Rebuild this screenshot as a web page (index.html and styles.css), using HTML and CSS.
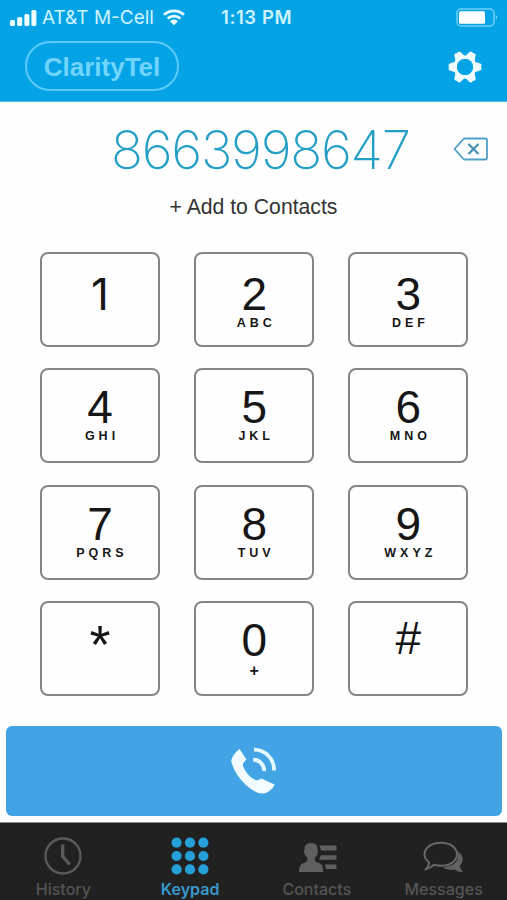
FILE: index.html
```html
<!DOCTYPE html>
<html lang="en">
<head>
  <meta charset="utf-8">
  <title>ClarityTel - Keypad</title>
  <link rel="stylesheet" href="styles.css">
</head>
<body>
  <div class="phone">
    <header class="header">
      <div class="status-bar">
        <svg class="signal" width="27" height="17" viewBox="0 0 27 17">
          <rect x="0" y="11" width="5" height="6" rx="1.5"/>
          <rect x="7.2" y="8" width="5" height="9" rx="1.5"/>
          <rect x="14.4" y="5" width="5" height="12" rx="1.5"/>
          <rect x="21.4" y="1" width="5" height="16" rx="1.5"/>
        </svg>
        <span class="carrier">AT&amp;T M-Cell</span>
        <svg class="wifi" width="24" height="18" viewBox="0 0 24 18">
          <path d="M2 6.8a14.5 14.5 0 0 1 20 0M5.7 10.6a9.2 9.2 0 0 1 12.6 0" fill="none" stroke="#e8fbff" stroke-width="2.8"/>
          <path d="M12 17.2l-3.9-4a5.6 5.6 0 0 1 7.8 0z" fill="#e8fbff"/>
        </svg>
        <span class="time">1:13 PM</span>
        <svg class="battery" width="43" height="19" viewBox="0 0 43 19">
          <rect x="1" y="1" width="37" height="17" rx="4" fill="none" stroke="#70d0f8" stroke-width="1.5"/>
          <rect x="3" y="3.2" width="26" height="12.6" rx="1.5" fill="#fff"/>
          <path d="M39.8 6.8q2.8 2.7 0 5.4z" fill="#70d0f8"/>
        </svg>
      </div>
      <div class="title-bar">
        <div class="brand">ClarityTel</div>
        <svg class="gear" width="34" height="32" viewBox="-17 -16 34 32">
          <g fill="#effcff">
            <g id="teeth">
              <path id="tooth" d="M-5.5 -9L-3.5 -15.2Q-3 -16.8 -1.5 -16.4Q0 -15.8 1.5 -16.4Q3 -16.8 3.5 -15.2L5.5 -9z" transform="rotate(90)"/>
              <use href="#tooth" transform="rotate(60)"/>
              <use href="#tooth" transform="rotate(120)"/>
            </g>
            <use href="#teeth" transform="rotate(180)"/>
          </g>
          <circle r="9.8" fill="none" stroke="#effcff" stroke-width="3.6"/>
          <circle r="8" fill="#04a3e5"/>
        </svg>
      </div>
    </header>

    <div class="number-row">
      <span class="number">8663998647</span>
      <svg class="backspace" width="36" height="24" viewBox="0 0 36 24">
        <path d="M1.5 12L11 1.5h21q2 0 2 2v17q0 2-2 2H11z" fill="none" stroke="#509fc8" stroke-width="1.8" stroke-linejoin="round"/>
        <path d="M15.5 7l10 10M25.5 7l-10 10" stroke="#438fb8" stroke-width="2.2"/>
      </svg>
    </div>
    <div class="add-contact">+ Add to Contacts</div>

    <div class="keypad">
      <div class="key first-row"><span class="digit one">1</span></div>
      <div class="key first-row"><span class="digit">2</span><span class="letters">ABC</span></div>
      <div class="key first-row"><span class="digit">3</span><span class="letters">DEF</span></div>
      <div class="key"><span class="digit">4</span><span class="letters">GHI</span></div>
      <div class="key"><span class="digit">5</span><span class="letters">JKL</span></div>
      <div class="key"><span class="digit">6</span><span class="letters">MNO</span></div>
      <div class="key"><span class="digit">7</span><span class="letters">PQRS</span></div>
      <div class="key"><span class="digit">8</span><span class="letters">TUV</span></div>
      <div class="key"><span class="digit">9</span><span class="letters">WXYZ</span></div>
      <div class="key star-key"><span class="digit star">*</span></div>
      <div class="key"><span class="digit">0</span><span class="letters plus">+</span></div>
      <div class="key hash-key"><span class="digit">#</span></div>
    </div>

    <div class="call-button">
      <svg width="48" height="48" viewBox="0 0 48 48">
        <path d="M9.5 2L16.5 12.5Q12.3 16 13 19Q17 29 25.5 33Q28 34 31.5 31.5L44.5 37.5Q43 43 35 46.3Q27 48 16.5 38.5Q4 27 1.2 14Q2 8 9.5 2z" fill="#f0fcff"/>
        <path d="M24 2.6A20 20 0 0 1 44 23.5M23.2 12.7A11 11 0 0 1 34.2 24.2" fill="none" stroke="#e5f8ff" stroke-width="3.8"/>
      </svg>
    </div>

    <nav class="tab-bar">
      <div class="tab">
        <svg width="38" height="38" viewBox="0 0 38 38" fill="none" stroke="#5b5b5b">
          <circle cx="19" cy="19" r="17.5" stroke-width="2.3"/>
          <path d="M18.7 7.5v12l7 8" stroke-width="3.3"/>
        </svg>
        <span>History</span>
      </div>
      <div class="tab active">
        <svg width="38" height="38" viewBox="0 0 38 38" fill="#26a0d8">
          <circle cx="5.6" cy="5.7" r="5.1"/><circle cx="19" cy="5.7" r="5.1"/><circle cx="32.4" cy="5.7" r="5.1"/>
          <circle cx="5.6" cy="19" r="5.1"/><circle cx="19" cy="19" r="5.1"/><circle cx="32.4" cy="19" r="5.1"/>
          <circle cx="5.6" cy="32.4" r="5.1"/><circle cx="19" cy="32.4" r="5.1"/><circle cx="32.4" cy="32.4" r="5.1"/>
        </svg>
        <span>Keypad</span>
      </div>
      <div class="tab">
        <svg width="40" height="38" viewBox="0 0 40 38" fill="#606060">
          <path d="M14 6C19 6 21 9 20.6 13Q21.4 14 20.7 16Q20 19 18 20.5V24Q19.5 25.2 22.5 26.2Q26.3 27.5 26.3 35H2Q2 27.5 6 26.2Q9 25.2 10.3 24V20.5Q8 19 7.3 16Q6.5 14 7.4 13Q7 6 14 6z"/>
          <path d="M22.5 8.5H39.5v5H24zM24 18.3H39.5v4.5H22zM28 27.5H39.5V32H29z"/>
        </svg>
        <span>Contacts</span>
      </div>
      <div class="tab">
        <svg width="42" height="38" viewBox="0 0 42 38">
          <path d="M35 14.5Q43.5 21 36.8 29Q37.3 32.5 40 35Q35 35.5 31.7 32.5Q24 34 20 30.2Q37 29 35 14.5z" fill="#626262"/>
          <path d="M18 5.8C27.5 5.8 34 10.8 34 17.3S27.5 28.8 18 28.8Q14 28.8 10.8 27.8Q7.5 31.3 3.2 32Q5.8 28.8 6.2 25.5Q1.5 22.3 1.5 17.3C1.5 10.8 8.5 5.8 18 5.8z" fill="#212121" stroke="#696969" stroke-width="2"/>
        </svg>
        <span>Messages</span>
      </div>
    </nav>
  </div>
</body>
</html>
```
FILE: styles.css
```css
* {
  box-sizing: border-box;
}
body {
  margin: 0;
  font-family: "Liberation Sans", Arial, sans-serif;
  background-color: #fefefe;
}
.phone {
  width: 507px;
  height: 900px;
  display: flex;
  flex-direction: column;
  overflow: hidden;
}
svg {
  display: block;
  flex-shrink: 0;
}
.header {
  height: 102px;
  background-color: #04a3e5;
  border-bottom: 1px solid #58bce9;
}
.status-bar {
  height: 34px;
  display: flex;
  align-items: center;
  padding-left: 10px;
  font-family: Inter, sans-serif;
  color: #cdf3ff;
  white-space: nowrap;
}
.signal {
  fill: #effcff;
}
.carrier {
  width: 112px;
  margin-left: 5px;
  font-size: 19px;
}
.wifi {
  margin-left: 8px;
}
.time {
  width: 74px;
  margin-left: 35px;
  font-size: 18.5px;
  font-weight: 600;
  letter-spacing: 0.6px;
}
.battery {
  margin-left: 161px;
}
.title-bar {
  display: flex;
  justify-content: space-between;
  padding: 7px 25px 0;
}
.brand {
  width: 154px;
  height: 50px;
  border: 2px solid #5ccbfa;
  border-radius: 25px;
  font-size: 26px;
  font-weight: bold;
  line-height: 48px;
  text-align: center;
  color: #70d4fd;
}
.gear {
  margin-top: 10px;
}
.number-row {
  height: 94px;
  display: flex;
  align-items: center;
  padding-left: 111px;
}
.number {
  width: 301px;
  padding-top: 2px;
  font-family: Inter, sans-serif;
  font-size: 53px;
  font-weight: 200;
  letter-spacing: -1.3px;
  white-space: nowrap;
  color: #239fc6;
}
.backspace {
  margin-left: 41px;
}
.add-contact {
  height: 56px;
  line-height: 22px;
  font-size: 21.2px;
  text-align: center;
  color: #333;
}
.keypad {
  display: grid;
  grid-template-columns: repeat(3, 120px);
  grid-auto-rows: 95px;
  gap: 21.3px 34.2px;
  padding-left: 40px;
}
.key {
  display: flex;
  flex-direction: column;
  align-items: center;
  padding-top: 15px;
  border: 2px solid #858585;
  border-radius: 8px;
  color: #161616;
}
.first-row {
  padding-top: 18px;
}
.star-key {
  padding-top: 19px;
}
.hash-key {
  padding-top: 13px;
}
.digit {
  height: 45px;
  line-height: 44px;
  font-size: 46px;
}
.one {
  font-family: Inter, sans-serif;
  font-size: 44px;
}
.star {
  font-size: 54px;
}
.letters {
  font-size: 12.5px;
  font-weight: bold;
  line-height: 12px;
  letter-spacing: 4px;
  margin-right: -4px;
}
.plus {
  padding-top: 2px;
  font-size: 16px;
}
.call-button {
  width: 496px;
  height: 90px;
  margin: 30px 0 0 6px;
  display: flex;
  align-items: center;
  justify-content: center;
  border-radius: 6px;
  background-color: #42a4e5;
}
.tab-bar {
  height: 78px;
  margin-top: 6px;
  display: grid;
  grid-template-columns: repeat(4, 1fr);
  border-top: 1px solid #8a8a8a;
  background-color: #212121;
}
.tab {
  display: flex;
  flex-direction: column;
  align-items: center;
  padding-top: 14px;
  font-family: Inter, sans-serif;
  font-size: 16px;
  font-weight: 500;
  line-height: 20px;
  color: #555;
}
.tab span {
  margin-top: 4px;
}
.active {
  font-weight: 600;
  color: #3799cb;
}
```
